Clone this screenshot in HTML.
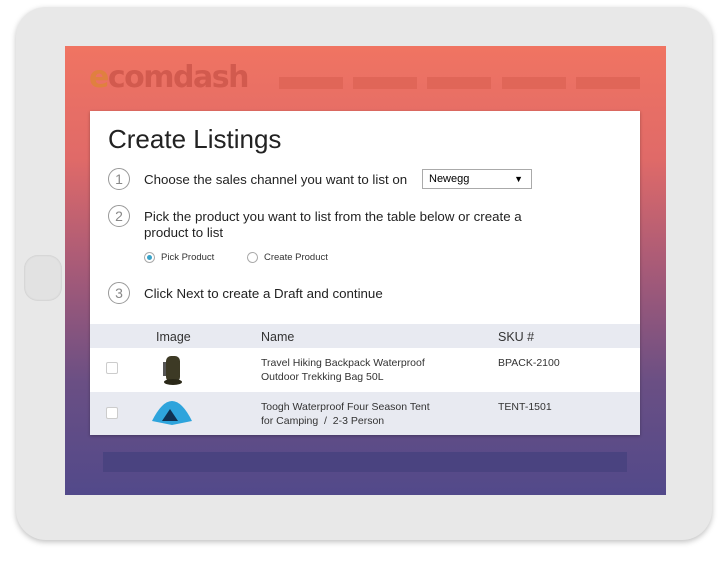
<!DOCTYPE html>
<html><head><style>
body{margin:0;width:727px;height:563px;background:#fff;position:relative;overflow:hidden;font-family:"Liberation Sans",sans-serif;}
.tab{position:absolute;left:16px;top:7px;width:696px;height:533px;border-radius:30px;background:#e8e8e8;box-shadow:0 2px 6px rgba(0,0,0,.25);}
.btn{position:absolute;left:24px;top:255px;width:38px;height:46px;border-radius:14px;background:#e2e2e2;box-shadow:inset 0 0 2px rgba(0,0,0,.15);}
.scr{position:absolute;left:65px;top:46px;width:601px;height:449px;background:linear-gradient(#f07462 0%,#e06a68 25%,#a65a78 50%,#6a4f84 75%,#52498a 100%);}
.logo{position:absolute;left:89px;top:60px;font-size:30px;font-weight:bold;font-family:"DejaVu Sans",sans-serif;color:#d25a4e;letter-spacing:-1.5px}
.nav{position:absolute;top:77px;height:12px;width:64px;background:#e06658}
.card{position:absolute;left:90px;top:111px;width:550px;height:324px;background:#fff;box-shadow:0 1px 3px rgba(0,0,0,.3)}
h1{position:absolute;left:18px;top:13px;margin:0;font-weight:normal;font-size:26px;color:#222}
.num{position:absolute;left:18px;width:20px;height:20px;border:1px solid #999;border-radius:50%;text-align:center;line-height:20px;font-size:14px;color:#888}
.t{position:absolute;left:54px;font-size:13.3px;color:#222;line-height:16px}
.sel{position:absolute;left:332px;top:58px;border:1px solid #aaa;font-size:11px;line-height:19px;padding-left:6px;box-sizing:border-box;width:110px;height:20px}
.radio{position:absolute;top:141px;width:9px;height:9px;border:1px solid #aaa;border-radius:50%}
.s{position:absolute;font-size:9.5px;color:#333}
.row{position:absolute;left:0;width:550px}
.cb{position:absolute;left:16px;width:10px;height:10px;border:1px solid #ccc;border-radius:2px;background:#fff}
.c{position:absolute;font-size:10.5px;color:#333;line-height:14px}
</style></head><body>
<div class="tab"></div><div class="btn"></div>
<div class="scr"></div>
<div class="logo"><span style="color:#e0803f">e</span>comdash</div>
<div class="nav" style="left:279px"></div><div class="nav" style="left:353px"></div><div class="nav" style="left:427px"></div><div class="nav" style="left:502px"></div><div class="nav" style="left:576px"></div>
<div style="position:absolute;left:103px;top:452px;width:524px;height:20px;background:#4a4380"></div>
<div class="card">
<h1>Create Listings</h1>
<div class="num" style="top:57px">1</div><div class="t" style="top:61px">Choose the sales channel you want to list on</div>
<div class="sel">Newegg<span style="position:absolute;right:8px;top:0;font-size:9px">▼</span></div>
<div class="num" style="top:94px">2</div><div class="t" style="top:98px">Pick the product you want to list from the table below or create a<br>product to list</div>
<div class="radio" style="left:54px;top:141px"><div style="margin:2px;width:5px;height:5px;border-radius:50%;background:#3aa3c8"></div></div>
<div class="s" style="left:71px;top:141px">Pick Product</div>
<div class="radio" style="left:157px"></div>
<div class="s" style="left:174px;top:141px">Create Product</div>
<div class="num" style="top:171px">3</div><div class="t" style="top:175px">Click Next to create a Draft and continue</div>
<div class="row" style="top:213px;height:24px;background:#e8eaf1"></div>
<div class="c" style="left:66px;top:219px;font-size:12.5px">Image</div>
<div class="c" style="left:171px;top:219px;font-size:12.5px">Name</div>
<div class="c" style="left:408px;top:219px;font-size:12.5px">SKU #</div>
<div class="cb" style="top:251px"></div>
<svg style="position:absolute;left:70px;top:241px" width="24" height="34"><rect x="6" y="4" width="14" height="26" rx="5" fill="#3d3a25"/><rect x="3" y="10" width="3" height="14" fill="#555"/><ellipse cx="13" cy="30" rx="9" ry="3" fill="#2a2818"/></svg>
<div class="c" style="left:171px;top:245px">Travel Hiking Backpack Waterproof<br>Outdoor Trekking Bag 50L</div>
<div class="c" style="left:408px;top:245px">BPACK-2100</div>
<div class="row" style="top:281px;height:43px;background:#e8eaf1"></div>
<div class="cb" style="top:296px"></div>
<svg style="position:absolute;left:60px;top:288px" width="44" height="28"><path d="M2 22 Q12 2 22 2 Q32 2 42 22 L22 26Z" fill="#2ea4dc"/><path d="M12 22 L20 10 L28 22Z" fill="#103050"/></svg>
<div class="c" style="left:171px;top:289px">Toogh Waterproof Four Season Tent<br>for Camping &nbsp;/&nbsp; 2-3 Person</div>
<div class="c" style="left:408px;top:289px">TENT-1501</div>
</div>
</body></html>
